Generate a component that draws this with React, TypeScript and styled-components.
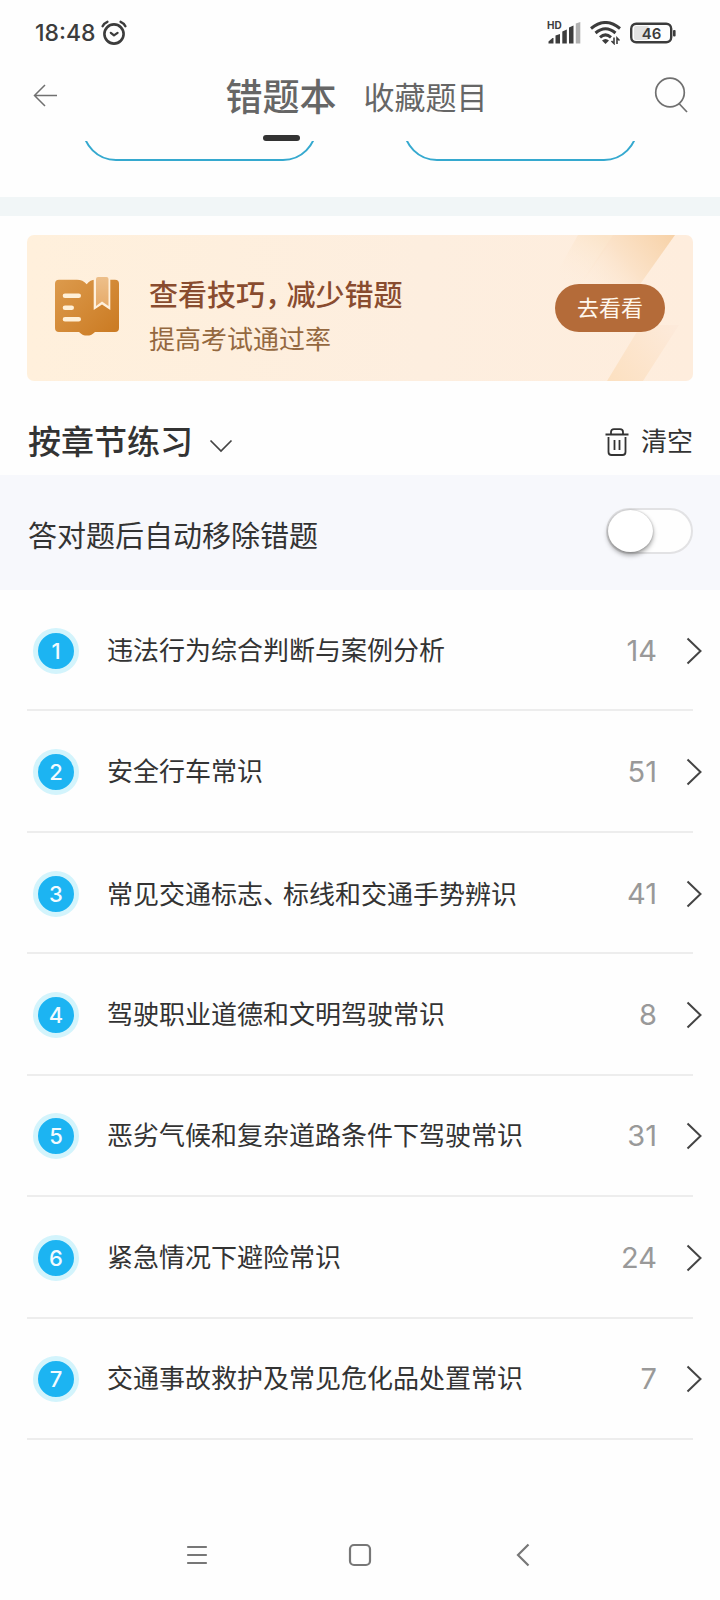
import React, { useState } from "react";
import styled, { createGlobalStyle } from "styled-components";

const GlobalStyle = createGlobalStyle`
  *, *::before, *::after { box-sizing: border-box; }
  body {
    margin: 0;
    background: #fefefe;
    color: #333;
    font-family: Inter, "Noto Sans CJK SC", sans-serif;
  }
  button {
    margin: 0;
    padding: 0;
    border: 0;
    background: none;
    color: inherit;
    font: inherit;
    cursor: pointer;
  }
  svg { display: block; flex: none; }
`;

const Page = styled.div`
  display: flex;
  flex-direction: column;
  min-height: 100vh;
`;

const StatusBar = styled.div`
  display: flex;
  align-items: center;
  justify-content: space-between;
  height: 66px;
  padding: 0 44px 0 35px;
  color: #3c3c3c;
`;

const StatusGroup = styled.div<{ $gap: number }>`
  display: flex;
  align-items: center;
  gap: ${(p) => p.$gap}px;
`;

const Clock = styled.span`
  font-size: 23px;
  font-weight: 500;
  line-height: 32px;
`;

const Header = styled.header`
  display: flex;
  justify-content: space-between;
  height: 75px;
  padding: 0 32px 0 33px;
`;

const IconButton = styled.button`
  display: flex;
  align-items: center;
  height: 58px;
  color: #707070;
`;

const Tabs = styled.nav`
  display: flex;
  gap: 27px;
`;

const Tab = styled.button<{ $active?: boolean }>`
  display: flex;
  flex-direction: column;
  align-items: center;
  justify-content: space-between;
  color: #666;
  font-size: ${(p) => (p.$active ? 37 : 31)}px;
  font-weight: ${(p) => (p.$active ? 500 : 400)};
  line-height: 64px;

  &::after {
    content: "";
    width: 37px;
    height: 6px;
    border-radius: 3px;
    background: ${(p) => (p.$active ? "#333" : "transparent")};
  }
`;

const ModeStrip = styled.div`
  display: grid;
  grid-template-columns: 1fr 1fr;
  align-content: end;
  gap: 86px;
  height: 56px;
  padding: 0 82px 36px;
  overflow: hidden;
`;

const ModePill = styled.span`
  height: 68px;
  border: 2px solid #35a9cf;
  border-radius: 34px;
`;

const Band = styled.div`
  height: 19px;
  background: #f1f6f7;
`;

const Banner = styled.section`
  position: relative;
  display: flex;
  align-items: center;
  height: 146px;
  margin: 19px 27px 0;
  padding: 0 28px 0 25px;
  border-radius: 7px;
  overflow: hidden;
  background: linear-gradient(90deg, #fff0dc, #fdeedf 60%, #feeddd);
`;

const BannerArt = styled.svg`
  position: absolute;
  top: 0;
  right: 0;
`;

const BannerText = styled.div`
  flex: 1;
  padding: 16px 0 0 29px;
`;

const BannerTitle = styled.h2`
  margin: 0;
  color: #894c2f;
  font-size: 29px;
  font-weight: 500;
  line-height: 44px;
`;

const BannerNote = styled.p`
  margin: 0;
  color: #94683f;
  font-size: 26px;
  line-height: 44px;
`;

const Punct = styled.span`
  padding-right: 7px;
  font-family: "Noto Sans CJK SC", sans-serif;
  font-feature-settings: "halt";
`;

const BannerButton = styled.button`
  position: relative;
  width: 110px;
  height: 48px;
  border-radius: 24px;
  background: #b46b39;
  color: #fff7ec;
  font-size: 22px;
  line-height: 48px;
`;

const SectionHead = styled.div`
  display: flex;
  align-items: flex-end;
  justify-content: space-between;
  height: 94px;
  padding: 0 27px 0 28px;
`;

const SectionButton = styled.button<{ $title?: boolean }>`
  display: flex;
  align-items: center;
  gap: ${(p) => (p.$title ? 16 : 12)}px;
  font-size: ${(p) => (p.$title ? 33 : 26)}px;
  font-weight: ${(p) => (p.$title ? 500 : 400)};
  line-height: 66px;
`;

const ChevronSlot = styled.span`
  padding-top: 8px;
`;

const SettingRow = styled.div`
  display: flex;
  justify-content: space-between;
  height: 115px;
  padding: 33px 27px 0 28px;
  background: #f7f8fc;
`;

const SettingLabel = styled.label`
  padding-top: 6px;
  font-size: 29px;
  line-height: 46px;
`;

const Switch = styled.input`
  appearance: none;
  flex: none;
  width: 87px;
  height: 46px;
  margin: 0;
  border: 2px solid #e2e2e4;
  border-radius: 23px;
  background: #fefefe;
  cursor: pointer;

  &::before {
    content: "";
    display: block;
    width: 45px;
    height: 42px;
    border-radius: 50%;
    background: #fff;
    box-shadow: 0 3px 5px rgba(0, 0, 0, 0.38), 0 0 2px rgba(0, 0, 0, 0.25);
  }
  &:checked { background: #1cb4f2; }
  &:checked::before { margin-left: 38px; }
`;

const ChapterList = styled.ul`
  display: grid;
  grid-auto-rows: 1fr;
  min-height: 850px;
  margin: 0;
  padding: 0 27px;
  list-style: none;
`;

const ChapterItem = styled.li`
  display: flex;
  border-bottom: 2px solid #ededed;
`;

const ChapterButton = styled.button`
  flex: 1;
  display: flex;
  align-items: center;
  margin-right: -9px;
  padding: 2px 0 0 6px;
  text-align: left;
`;

const Badge = styled.span`
  width: 46px;
  height: 46px;
  border: 5px solid #d3f4fc;
  border-radius: 50%;
  background: #1cb4f2;
  color: #f2fbff;
  font-size: 22px;
  font-weight: 500;
  line-height: 36px;
  text-align: center;
`;

const ChapterName = styled.span`
  flex: 1;
  padding-left: 28px;
  font-size: 26px;
  line-height: 40px;
`;

const Count = styled.span`
  padding-right: 29px;
  color: #999;
  font-size: 29px;
  line-height: 40px;
`;

const SystemNav = styled.nav`
  display: grid;
  grid-template-columns: repeat(3, 1fr);
  height: 90px;
  margin-top: auto;
  padding: 0 16%;
  color: #777;
`;

const SystemButton = styled.button`
  display: flex;
  align-items: center;
  justify-content: center;
`;

const AlarmIcon = () => (
  <svg width="26" height="26" viewBox="0 0 26 26" fill="none" stroke="currentColor" strokeLinecap="round">
    <circle cx="13" cy="14" r="9.6" strokeWidth="2.6" />
    <path d="M1.6 6.2Q3 3.2 6.4 1.8M24.4 6.2Q23 3.2 19.6 1.8" strokeWidth="2.4" />
    <path d="M9.8 12.8l3.2 2.6 3.6-2.6" strokeWidth="2.2" strokeLinejoin="round" />
  </svg>
);

const SignalIcon = () => (
  <svg width="34" height="30" viewBox="0 -3 34 30" fill="currentColor">
    <text x="0" y="8" fontSize="10" fontWeight="700">HD</text>
    <path d="M1.5 22.5v-2l4-3.500h1v5.500z" />
    <path d="M8.500 22.500v-8l4.500-1.500v9.500z" />
    <path d="M15.300 22.500v-12l4.500-2v14z" />
    <path d="M22 22.500v-16l4.500-2v18z" />
    <path d="M28.800 22.500v-20l4.500-1.500v21.500z" opacity=".4" />
  </svg>
);

const WifiIcon = () => (
  <svg width="31" height="24" viewBox="0 0 31 24" fill="none" stroke="currentColor" strokeWidth="3">
    <path d="M1 7.500Q15.500 -4.500 30 7.500" />
    <path d="M5.500 12Q15.500 3.500 25.500 12" />
    <path d="M10 16.300Q15.500 11.500 21 16.300" />
    <path d="M12 19.500q3.500-3 7 0l-3.500 3.500z" fill="currentColor" stroke="none" />
    <path d="M24 16.500v6l-2.500-2.500M27 23v-6l2.500 2.500" strokeWidth="1.600" />
  </svg>
);

const BatteryIcon = () => (
  <svg width="46" height="22" viewBox="0 0 46 22" fill="none">
    <rect x="4" y="4" width="15" height="14" rx="2" fill="#e2e2e2" />
    <rect x="1.200" y="1.700" width="40" height="18.600" rx="5" stroke="currentColor" strokeWidth="2.400" />
    <rect x="43" y="8" width="2.600" height="6.500" rx="1" fill="currentColor" />
    <text x="21.500" y="16.500" fontSize="15" fontWeight="600" textAnchor="middle" fill="currentColor">46</text>
  </svg>
);

const BackArrow = () => (
  <svg width="26" height="24" viewBox="0 0 26 24" fill="none" stroke="currentColor" strokeWidth="1.500">
    <path d="M24 12.500H1.500M12 2L1.500 12.500 12 23" />
  </svg>
);

const SearchIcon = () => (
  <svg width="34" height="36" viewBox="0 0 34 36" fill="none" stroke="currentColor" strokeWidth="1.700">
    <circle cx="16" cy="15.500" r="14.300" />
    <path d="M25 26.500L33 35" />
  </svg>
);

const BookIcon = () => (
  <svg width="68" height="68" viewBox="0 0 68 68" fill="none">
    <defs>
      <linearGradient id="cover" x1="6" y1="4" x2="62" y2="60" gradientUnits="userSpaceOnUse">
        <stop offset="0" stopColor="#dc9a4c" />
        <stop offset="1" stopColor="#cb7b23" />
      </linearGradient>
      <linearGradient id="ribbon" x1="0" y1="3" x2="0" y2="34" gradientUnits="userSpaceOnUse">
        <stop offset="0" stopColor="#edbf8a" />
        <stop offset="1" stopColor="#e6aa68" />
      </linearGradient>
    </defs>
    <path
      d="M7 5.700H25C29 5.700 32 7 34.700 10.300C37 7 40 5.700 43 5.700H63Q67 5.700 67 9.700V54Q67 58 63 58H43C40 61 38 61.500 35 61.500C32 61.500 30 61 27 58H7Q3 58 3 54V9.700Q3 5.700 7 5.700Z"
      fill="url(#cover)"
    />
    <path d="M41.700 4H58.300V36L50 30.500 41.700 36Z" fill="#fff0dc" />
    <path d="M44 5Q44 3 46 3H54.500Q56.500 3 56.500 5V32L50 27.500 44 32Z" fill="url(#ribbon)" />
    <path d="M13 21.700H26.700M13 33.700H19.700M13 45.300H26.700" stroke="#fff0d8" strokeWidth="4.600" strokeLinecap="round" />
  </svg>
);

const Stripes = () => (
  <BannerArt width="150" height="146" viewBox="0 0 150 146">
    <defs>
      <linearGradient id="beam" x1="132" y1="0" x2="50" y2="70" gradientUnits="userSpaceOnUse">
        <stop offset="0" stopColor="#f7d2a8" />
        <stop offset=".5" stopColor="#fbe2c8" />
        <stop offset="1" stopColor="#feeddd" stopOpacity="0" />
      </linearGradient>
      <linearGradient id="haze" x1="60" y1="0" x2="25" y2="50" gradientUnits="userSpaceOnUse">
        <stop offset="0" stopColor="#fbe4c9" />
        <stop offset="1" stopColor="#feeddd" stopOpacity="0" />
      </linearGradient>
      <linearGradient id="foot" x1="64" y1="146" x2="130" y2="90" gradientUnits="userSpaceOnUse">
        <stop offset="0" stopColor="#fce0c0" />
        <stop offset="1" stopColor="#fdeada" />
      </linearGradient>
    </defs>
    <path d="M35 0H72L30 62H0Z" fill="url(#haze)" />
    <path d="M70 0H132L88 62H28Z" fill="url(#beam)" />
    <path d="M98 90H136L100 146H64Z" fill="url(#foot)" />
  </BannerArt>
);

const DownChevron = () => (
  <svg width="24" height="14" viewBox="0 0 24 14" fill="none" stroke="#444" strokeWidth="1.700">
    <path d="M1.500 1.500L12 12 22.500 1.500" />
  </svg>
);

const TrashIcon = () => (
  <svg width="24" height="28" viewBox="0 0 24 28" fill="none" stroke="currentColor" strokeWidth="1.800">
    <path d="M.5 6.500H23.500M6 6V4Q6 1.200 9 1.200H15Q18 1.200 18 4V6M3.500 9V24Q3.500 27 6.500 27H17.500Q20.500 27 20.500 24V9" />
    <path d="M9.500 12V22M14.500 12V22" />
  </svg>
);

const RightChevron = () => (
  <svg width="16" height="28" viewBox="0 0 16 28" fill="none" stroke="#444" strokeWidth="2">
    <path d="M1.500 1.500L14.500 14 1.500 26.500" />
  </svg>
);

const MenuIcon = () => (
  <svg width="22" height="22" viewBox="0 0 22 22" fill="none" stroke="currentColor" strokeWidth="2.200" strokeLinecap="round">
    <path d="M2 3H20M2 11H20M2 19H20" />
  </svg>
);

const HomeIcon = () => (
  <svg width="24" height="24" viewBox="0 0 24 24" fill="none" stroke="currentColor" strokeWidth="2.200">
    <rect x="2" y="2" width="20" height="20" rx="4" />
  </svg>
);

const BackIcon = () => (
  <svg width="14" height="24" viewBox="0 0 14 24" fill="none" stroke="currentColor" strokeWidth="2.200">
    <path d="M12.500 1.500L2 12 12.500 22.500" />
  </svg>
);

const chapters = [
  { name: "违法行为综合判断与案例分析", count: 14 },
  { name: "安全行车常识", count: 51 },
  { name: "常见交通标志、标线和交通手势辨识", count: 41 },
  { name: "驾驶职业道德和文明驾驶常识", count: 8 },
  { name: "恶劣气候和复杂道路条件下驾驶常识", count: 31 },
  { name: "紧急情况下避险常识", count: 24 },
  { name: "交通事故救护及常见危化品处置常识", count: 7 },
];

/* Sets full-width commas (U+FF0C, U+3001) with a tighter advance. */
const Tight = ({ text }: { text: string }) => (
  <>
    {text.split(/([\uff0c\u3001])/).map((part, i) =>
      i % 2 === 1 ? <Punct key={i}>{part}</Punct> : part
    )}
  </>
);

export default function App() {
  const [autoRemove, setAutoRemove] = useState(false);

  return (
    <Page lang="zh-CN">
      <GlobalStyle />
      <StatusBar>
        <StatusGroup $gap={5}>
          <Clock>18:48</Clock>
          <AlarmIcon />
        </StatusGroup>
        <StatusGroup $gap={9}>
          <SignalIcon />
          <WifiIcon />
          <BatteryIcon />
        </StatusGroup>
      </StatusBar>

      <Header>
        <IconButton type="button"><BackArrow /></IconButton>
        <Tabs>
          <Tab type="button" $active>错题本</Tab>
          <Tab type="button">收藏题目</Tab>
        </Tabs>
        <IconButton type="button"><SearchIcon /></IconButton>
      </Header>

      <main>
        <ModeStrip>
          <ModePill />
          <ModePill />
        </ModeStrip>
        <Band />

        <Banner>
          <Stripes />
          <BookIcon />
          <BannerText>
            <BannerTitle><Tight text={"查看技巧\uff0c减少错题"} /></BannerTitle>
            <BannerNote>提高考试通过率</BannerNote>
          </BannerText>
          <BannerButton type="button">去看看</BannerButton>
        </Banner>

        <SectionHead>
          <SectionButton type="button" $title>
            按章节练习
            <ChevronSlot><DownChevron /></ChevronSlot>
          </SectionButton>
          <SectionButton type="button">
            <TrashIcon />
            清空
          </SectionButton>
        </SectionHead>

        <SettingRow>
          <SettingLabel htmlFor="auto-remove">答对题后自动移除错题</SettingLabel>
          <Switch
            id="auto-remove"
            type="checkbox"
            role="switch"
            checked={autoRemove}
            onChange={(e) => setAutoRemove(e.target.checked)}
          />
        </SettingRow>

        <ChapterList>
          {chapters.map((chapter, i) => (
            <ChapterItem key={chapter.name}>
              <ChapterButton type="button">
                <Badge>{i + 1}</Badge>
                <ChapterName><Tight text={chapter.name} /></ChapterName>
                <Count>{chapter.count}</Count>
                <RightChevron />
              </ChapterButton>
            </ChapterItem>
          ))}
        </ChapterList>
      </main>

      <SystemNav>
        <SystemButton type="button"><MenuIcon /></SystemButton>
        <SystemButton type="button"><HomeIcon /></SystemButton>
        <SystemButton type="button"><BackIcon /></SystemButton>
      </SystemNav>
    </Page>
  );
}
